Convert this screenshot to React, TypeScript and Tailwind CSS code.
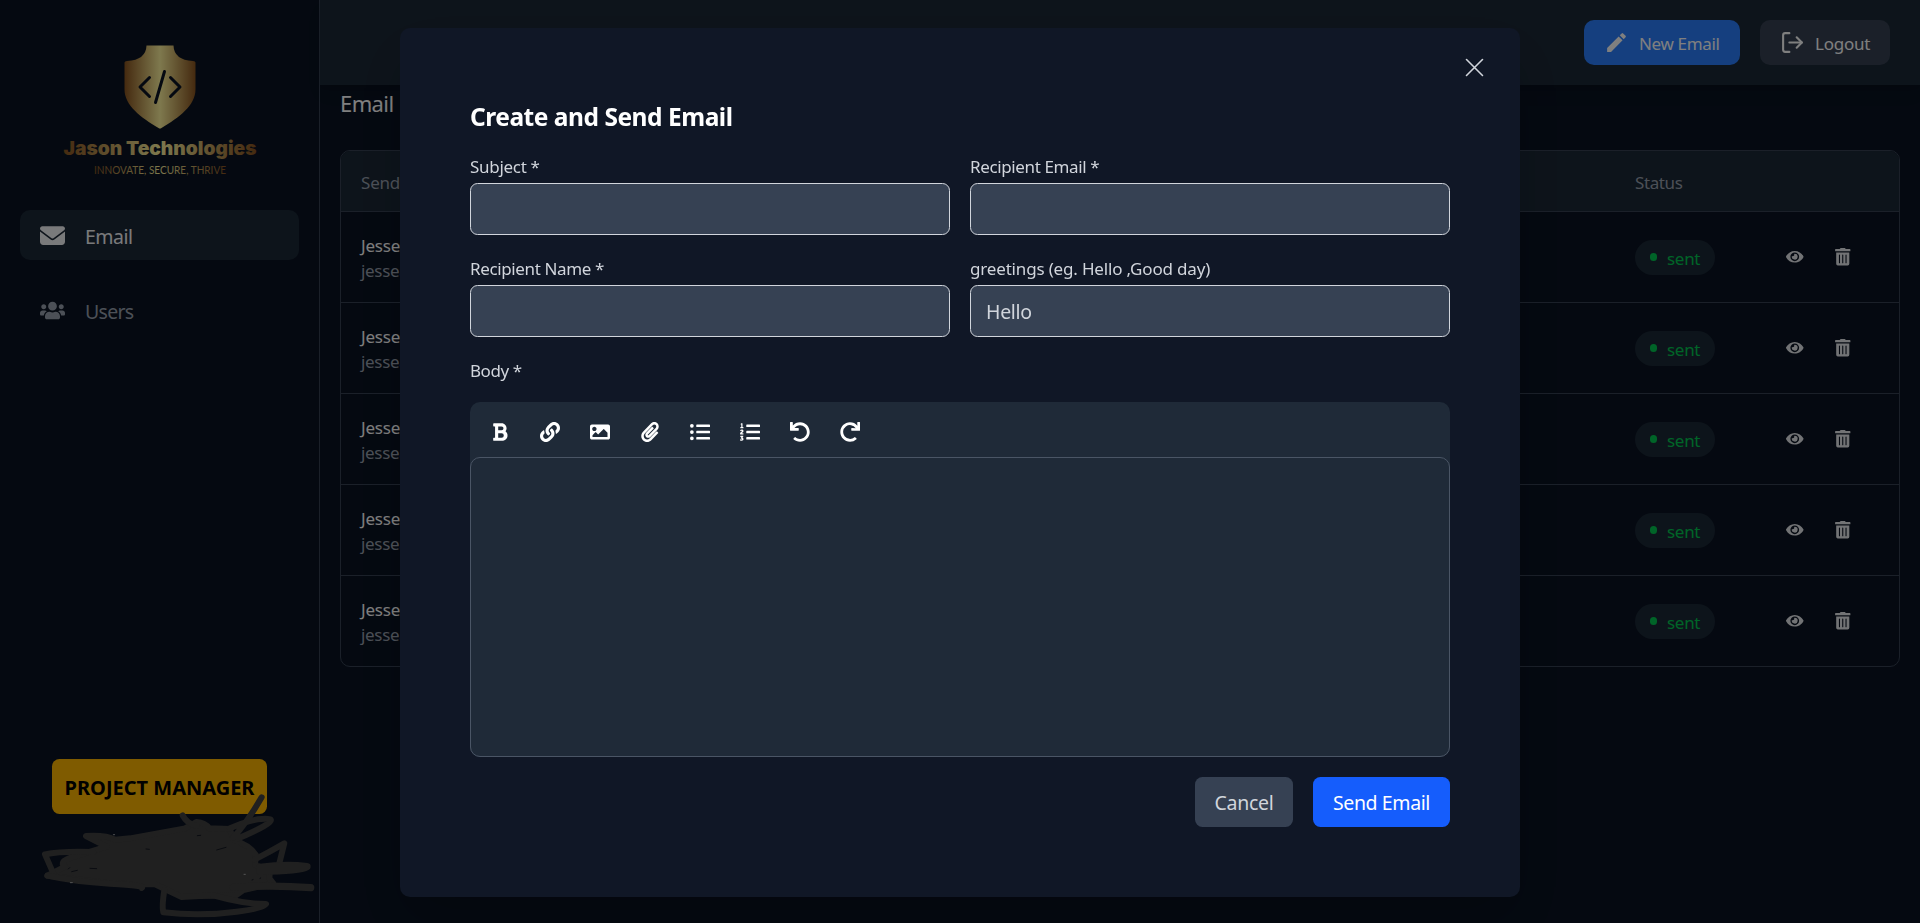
import React from 'react';
import {
  FaBold, FaEye, FaImage, FaLink, FaListOl, FaListUl, FaPaperclip, FaRedo, FaTrashAlt, FaUndo, FaUsers,
} from 'react-icons/fa';
import { FaEnvelope } from 'react-icons/fa6';
import { FiLogOut } from 'react-icons/fi';
import { MdEdit } from 'react-icons/md';

const tools = [FaBold, FaLink, FaImage, FaPaperclip, FaListUl, FaListOl, FaUndo, FaRedo];
const rows = [1, 2, 3, 4, 5];

function Logo() {
  return (
    <svg className="mx-auto block h-[138px] w-[200px]" viewBox="0 0 200 138">
      <defs>
        <linearGradient id="shield" x1="0" x2="1" y1="0" y2="0">
          <stop offset="0" stopColor="#8a5420" />
          <stop offset="0.5" stopColor="#fdf29c" />
          <stop offset="1" stopColor="#8a5420" />
        </linearGradient>
        <linearGradient id="brand" gradientUnits="userSpaceOnUse" x1="3" x2="197" y1="0" y2="0">
          <stop offset="0" stopColor="#8a5420" />
          <stop offset="0.5" stopColor="#fdf29c" />
          <stop offset="1" stopColor="#8a5420" />
        </linearGradient>
        <linearGradient id="tagline" gradientUnits="userSpaceOnUse" x1="34" x2="166" y1="0" y2="0">
          <stop offset="0" stopColor="#8a5420" />
          <stop offset="0.5" stopColor="#fdf29c" />
          <stop offset="1" stopColor="#8a5420" />
        </linearGradient>
      </defs>
      <path
        d="M86.500 5.500H113.500Q114 20 133 21Q135.500 21 135.500 22.500V49.500C135.500 65.500 119 77.500 101.500 88Q100 89 98.500 88C81 77.500 64.500 65.500 64.500 49.500V22.500Q64.500 21 67 21Q86 20 86.500 5.500Z"
        fill="url(#shield)"
      />
      <g fill="none" stroke="#0a1322" strokeWidth="3" strokeLinecap="round" strokeLinejoin="round">
        <path d="M89.500 37.500L80 47L89.500 56.500M110.500 37.500L120 47L110.500 56.500M104.500 31.500L95.500 62.500" />
      </g>
      <text x="3.500" y="114.500" textLength="193" lengthAdjust="spacingAndGlyphs" fill="url(#brand)" className="font-['Inter'] text-[19px] font-black">
        Jason Technologies
      </text>
      <text x="34" y="134" textLength="132" lengthAdjust="spacingAndGlyphs" fill="url(#tagline)" className="font-['Lato'] text-[11px]">
        INNOVATE, SECURE, THRIVE
      </text>
    </svg>
  );
}

function Sidebar() {
  return (
    <aside className="flex w-[320px] shrink-0 flex-col border-r border-[#364153] pt-10">
      <Logo />
      <nav className="mt-8 flex flex-col gap-[25px] px-5 text-[19.5px] leading-[30px]">
        <a className="flex h-[50px] items-center gap-5 rounded-[10px] bg-[#1b2836] pl-5 text-gray-100">
          <FaEnvelope size={25} />
          <span className="pt-1 tracking-[-0.5px]">Email</span>
        </a>
        <a className="flex h-[50px] items-center gap-5 pl-5 text-[#99a1af]">
          <FaUsers size={25} />
          <span className="pt-1 tracking-[-0.7px]">Users</span>
        </a>
      </nav>
      <div className="mt-auto mb-[109px] flex h-[55px] w-[215px] items-center justify-center self-center rounded-[7.5px] bg-[#ffb600] pt-0.5 text-xl font-bold whitespace-nowrap text-black">
        PROJECT MANAGER
      </div>
    </aside>
  );
}

function Header() {
  return (
    <header className="flex h-[85px] shrink-0 items-center justify-end gap-5 bg-[#1b2836] pr-[30px] text-[17px] text-white shadow-lg">
      <button className="flex h-[45px] w-[156px] items-center gap-2.5 rounded-[10px] bg-[#2b7fff] pl-5">
        <MdEdit size={25} />
        <span className="pt-0.5 tracking-[-0.35px] whitespace-nowrap">New Email</span>
      </button>
      <button className="flex h-[45px] w-[130px] items-center gap-2.5 rounded-[10px] bg-[#364153] pl-5">
        <FiLogOut size={25} />
        <span className="pt-0.5 tracking-[-0.25px]">Logout</span>
      </button>
    </header>
  );
}

function EmailTable() {
  return (
    <div className="overflow-hidden rounded-[10px] border border-[#364153] text-[17px] leading-[25px]">
      <div className="flex h-[60px] items-center bg-[#1b2836] px-5 pt-0.5 text-[#99a1af]">
        <div className="w-[1274px] tracking-[-0.2px]">Sender</div>
        <div className="tracking-[-0.4px]">Status</div>
      </div>
      {rows.map((r) => (
        <div key={r} className="flex h-[91px] items-center border-t border-[#364153] px-5">
          <div className="w-[1274px] pt-0.5">
            <div className="tracking-[-0.2px] text-white">Jesse</div>
            <div className="tracking-[-0.3px] text-[#99a1af]">jessea</div>
          </div>
          <div className="flex h-[35px] w-[80px] items-center gap-[10px] rounded-full bg-[#1b2836] pl-[15px] text-[#00c950]">
            <span className="h-2 w-[7px] rounded-full bg-[#00c950]" />
            <span className="pt-[3px] tracking-[-0.3px]">sent</span>
          </div>
          <div className="ml-[71px] flex gap-[30px] text-gray-200">
            <FaEye size={17.5} />
            <FaTrashAlt size={17.5} />
          </div>
        </div>
      ))}
    </div>
  );
}

function Field({ label, value, tracking }: { label: string; value?: string; tracking: string }) {
  return (
    <div className="flex flex-col">
      <label className={`h-[25px] text-[17px] leading-[25px] whitespace-nowrap text-[#d1d5dc] ${tracking}`}>{label}</label>
      <div className="mt-1 flex h-[52px] items-center rounded-[7.5px] border border-[#d1d5dc] bg-[#364153] px-[15px] pt-0.5 text-[19.5px] tracking-[-0.3px] text-[#d1d5dc]">
        {value}
      </div>
    </div>
  );
}

function EmailModal() {
  return (
    <div className="fixed inset-0 flex items-center justify-center bg-black/50 pt-0.5">
      <div className="relative flex h-[869px] w-[1120px] flex-col rounded-[10px] bg-[#101726] px-[70px] pt-[71px] shadow-2xl">
        <button className="absolute top-[27px] right-[33px] text-[#d1d5dc]">
          <svg width="25" height="25" viewBox="0 0 25 25" fill="none" stroke="currentColor" strokeWidth="1.600" strokeLinecap="round">
            <path d="M4.500 4.500L20.500 20.500M20.500 4.500L4.500 20.500" />
          </svg>
        </button>
        <h2 className="h-[35px] text-[24.5px] leading-[35px] font-bold tracking-[-0.47px] text-white">Create and Send Email</h2>
        <div className="mt-5 grid grid-cols-2 gap-x-5 gap-y-[21px]">
          <Field label="Subject *" tracking="tracking-[-0.3px]" />
          <Field label="Recipient Email *" tracking="tracking-[-0.37px]" />
          <Field label="Recipient Name *" tracking="tracking-[-0.37px]" />
          <Field label="greetings (eg. Hello ,Good day)" value="Hello" tracking="tracking-[-0.17px]" />
        </div>
        <div className="mt-[21px] text-[17px] leading-[25px] tracking-[-0.45px] text-[#d1d5dc]">Body *</div>
        <div className="mt-[19px] rounded-[10px] bg-[#1f2a38]">
          <div className="flex h-[55px] items-center gap-[30px] px-5 pt-[5px] text-white">
            {tools.map((Icon, i) => (
              <Icon key={i} size={20} />
            ))}
          </div>
          <div className="h-[300px] rounded-[10px] border border-[#4a5565]" />
        </div>
        <div className="mt-5 flex justify-end gap-5 text-[19.5px]">
          <button className="h-[50px] w-[98px] rounded-[7.5px] bg-[#364153] pt-0.5 tracking-[-0.3px] text-[#d1d5dc]">Cancel</button>
          <button className="h-[50px] w-[137px] rounded-[7.5px] bg-[#155dfc] pt-0.5 tracking-[-0.4px] whitespace-nowrap text-white">Send Email</button>
        </div>
      </div>
    </div>
  );
}

function Scribble() {
  return (
    <svg
      className="pointer-events-none fixed bottom-0 left-0 h-[183px] w-[420px]"
      viewBox="0 0 1260 549"
      fill="none"
      stroke="#202020"
      strokeWidth="18"
      strokeLinecap="round"
      strokeLinejoin="round"
    >
      <path
        fill="#202020"
        d="M258 288Q320 285 345 299L390 295L555 265L590 246Q615 248 628 265L690 267L700 300Q750 315 768 345L765 375L810 390L808 415L820 430L730 450L705 468Q620 466 545 471L465 433L400 433L330 430L142 407L195 380Q175 365 215 352L320 320Z"
      />
      <path d="M160 400L135 343Q180 333 280 336" />
      <path d="M142 407Q220 425 330 431T425 444" />
      <path d="M548 226Q560 250 590 258M785 172Q740 250 700 292M690 265Q770 230 812 238Q820 250 715 295" />
      <path d="M765 358Q810 335 853 310L838 370" />
      <path strokeWidth="22" d="M780 382Q860 372 921 380Q900 393 780 394M700 442Q820 434 932 443" />
      <path d="M493 450Q485 500 490 517Q600 530 710 515Q790 505 798 492Q730 492 640 466" />
      <g stroke="#0a0c11" strokeWidth="3">
        <path d="M592 287L602 286M650 330L678 322M438 327L448 328M270 385L290 386M205 387L209 383M215 395L232 391M756 420L759 419M780 415L782 414" />
      </g>
      <path stroke="#707070" strokeWidth="2" d="M340 284H344M211 428H217M732 403H736" />
    </svg>
  );
}

export default function App() {
  return (
    <div className="flex h-[923px] w-full overflow-hidden bg-[#0a1322] font-['Noto_Sans',sans-serif]">
      <Sidebar />
      <main className="flex min-w-0 flex-1 flex-col">
        <Header />
        <div className="px-5">
          <h1 className="mt-px mb-[29px] h-[35px] text-[22px] leading-[35px] tracking-[-0.6px] text-white">Email</h1>
          <EmailTable />
        </div>
      </main>
      <EmailModal />
      <Scribble />
    </div>
  );
}
